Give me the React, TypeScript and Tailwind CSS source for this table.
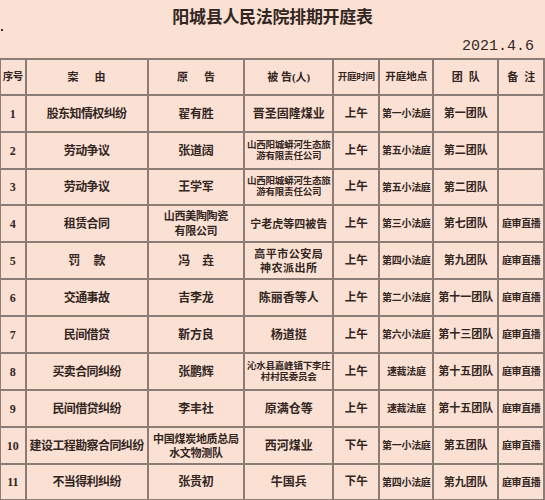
import React from "react"

type Row = {
  no: string
  cause: React.ReactNode
  plaintiff: React.ReactNode
  defendant: React.ReactNode
  time: string
  place: string
  team: string
  note?: string
}

function Spaced({ a, b, gap }: { a: string; b: string; gap: string }) {
  return (
    <span className={`inline-flex justify-center ${gap}`}>
      <span>{a}</span>
      <span>{b}</span>
    </span>
  )
}

function TwoLine({ a, b, size }: { a: string; b: string; size: string }) {
  return (
    <span className={`block whitespace-nowrap ${size}`}>
      <span className="block">{a}</span>
      <span className="block">{b}</span>
    </span>
  )
}

const rows: Row[] = [
  { no: "1", cause: "股东知情权纠纷", plaintiff: "翟有胜", defendant: "晋圣固隆煤业", time: "上午", place: "第一小法庭", team: "第一团队" },
  {
    no: "2",
    cause: "劳动争议",
    plaintiff: "张道阔",
    defendant: <TwoLine a="山西阳城蟒河生态旅" b="游有限责任公司" size="text-[9.5px] leading-[11px] tracking-[-0.2px]" />,
    time: "上午",
    place: "第五小法庭",
    team: "第二团队",
  },
  {
    no: "3",
    cause: "劳动争议",
    plaintiff: "王学军",
    defendant: <TwoLine a="山西阳城蟒河生态旅" b="游有限责任公司" size="text-[9.5px] leading-[11px] tracking-[-0.2px]" />,
    time: "上午",
    place: "第五小法庭",
    team: "第二团队",
  },
  {
    no: "4",
    cause: "租赁合同",
    plaintiff: <TwoLine a="山西美陶陶瓷" b="有限公司" size="text-[11px] leading-[15px]" />,
    defendant: <span className="text-[11px]">宁老虎等四被告</span>,
    time: "上午",
    place: "第三小法庭",
    team: "第七团队",
    note: "庭审直播",
  },
  {
    no: "5",
    cause: <Spaced a="罚" b="款" gap="gap-[14px]" />,
    plaintiff: <Spaced a="冯" b="垚" gap="gap-[12px]" />,
    defendant: <TwoLine a="高平市公安局" b="神农派出所" size="text-[11px] leading-[14px] tracking-[0.5px]" />,
    time: "上午",
    place: "第四小法庭",
    team: "第九团队",
    note: "庭审直播",
  },
  { no: "6", cause: "交通事故", plaintiff: "吉李龙", defendant: "陈丽香等人", time: "上午", place: "第二小法庭", team: "第十一团队", note: "庭审直播" },
  { no: "7", cause: "民间借贷", plaintiff: "靳方良", defendant: "杨道挺", time: "上午", place: "第六小法庭", team: "第十三团队", note: "庭审直播" },
  {
    no: "8",
    cause: "买卖合同纠纷",
    plaintiff: "张鹏辉",
    defendant: <TwoLine a="沁水县嘉峰镇下李庄" b="村村民委员会" size="text-[9.5px] leading-[11px] tracking-[-0.2px]" />,
    time: "上午",
    place: "速裁法庭",
    team: "第十五团队",
    note: "庭审直播",
  },
  { no: "9", cause: "民间借贷纠纷", plaintiff: "李丰社", defendant: "原满仓等", time: "上午", place: "速裁法庭", team: "第十五团队", note: "庭审直播" },
  {
    no: "10",
    cause: "建设工程勘察合同纠纷",
    plaintiff: <TwoLine a="中国煤炭地质总局" b="水文物测队" size="text-[11px] leading-[14px]" />,
    defendant: "西河煤业",
    time: "下午",
    place: "第一小法庭",
    team: "第五团队",
    note: "庭审直播",
  },
  { no: "11", cause: "不当得利纠纷", plaintiff: "张贵初", defendant: "牛国兵", time: "下午", place: "第四小法庭", team: "第九团队", note: "庭审直播" },
]

const cell = "border-2 border-[#8b7d75] text-center align-middle p-0"

export default function App() {
  return (
    <div
      className="relative h-[500px] w-[545px] overflow-hidden bg-[#d9d0cc] text-[#33261f]"
      style={{ fontFamily: '"Liberation Serif", "Noto Sans CJK SC", serif' }}
    >
      <div className="bg-[#fbe1d4]">
        <span className="absolute left-[1px] top-[29px] h-[2px] w-[2px] bg-[#3a2d28]" />

        {/* title */}
        <div className="flex h-[34px] items-center justify-center pt-[1px] text-[17px] font-bold tracking-[-0.3px]">
          阳城县人民法院排期开庭表
        </div>

        {/* date */}
        <div
          className="flex h-[24px] items-center justify-end pr-[11px] pt-[3px] text-[15px]"
          style={{ fontFamily: '"Liberation Mono", monospace' }}
        >
          2021.4.6
        </div>

        <table className="-ml-[1px] table-fixed border-collapse font-bold">
          <colgroup>
            <col className="w-[26px]" />
            <col className="w-[124px]" />
            <col className="w-[97px]" />
            <col className="w-[89px]" />
            <col className="w-[47px]" />
            <col className="w-[55px]" />
            <col className="w-[66px]" />
            <col className="w-[46px]" />
          </colgroup>
          <thead>
            <tr className="h-[36px]">
              <th className={`${cell} text-[10.5px] tracking-[-0.5px]`}>序号</th>
              <th className={`${cell} text-[11px]`}>
                <Spaced a="案" b="由" gap="gap-[16px]" />
              </th>
              <th className={`${cell} text-[11px]`}>
                <Spaced a="原" b="告" gap="gap-[16px]" />
              </th>
              <th className={`${cell} text-[11px]`}>被&nbsp;告(人)</th>
              <th className={`${cell} text-[9.5px] tracking-[-0.3px]`}>开庭时间</th>
              <th className={`${cell} text-[10.5px]`}>开庭地点</th>
              <th className={`${cell} text-[11px]`}>
                <Spaced a="团" b="队" gap="gap-[6px]" />
              </th>
              <th className={`${cell} text-[11px]`}>
                <Spaced a="备" b="注" gap="gap-[6px]" />
              </th>
            </tr>
          </thead>
          <tbody>
            {rows.map((r, i) => (
              <tr key={r.no} className={i === 2 || i === 10 ? "h-[36px]" : "h-[37px]"}>
                <td className={`${cell} text-[12px]`}>{r.no}</td>
                <td className={`${cell} text-[12px] tracking-[-0.6px]`}>{r.cause}</td>
                <td className={`${cell} text-[12px] tracking-[-0.3px]`}>{r.plaintiff}</td>
                <td className={`${cell} text-[12px]`}>{r.defendant}</td>
                <td className={`${cell} text-[11.5px]`}>{r.time}</td>
                <td className={`${cell} text-[10px] tracking-[-0.3px]`}>{r.place}</td>
                <td className={`${cell} text-[11px]`}>{r.team}</td>
                <td className={`${cell} text-[10px] tracking-[-0.4px]`}>{r.note ?? ""}</td>
              </tr>
            ))}
          </tbody>
        </table>
      </div>
    </div>
  )
}
